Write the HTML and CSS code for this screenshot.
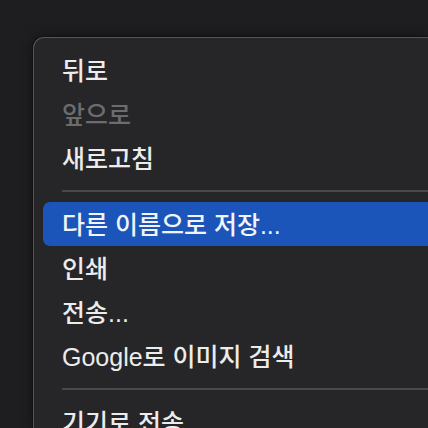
FILE: index.html
```html
<!DOCTYPE html>
<html lang="ko">
<head>
<meta charset="utf-8">
<link rel="stylesheet" href="styles.css">
</head>
<body>
<div class="menu">
  <div class="item">뒤로</div>
  <div class="item disabled">앞으로</div>
  <div class="item">새로고침</div>
  <div class="sep"></div>
  <div class="item active">다른 이름으로 저장...</div>
  <div class="item">인쇄</div>
  <div class="item">전송...</div>
  <div class="item">Google로 이미지 검색</div>
  <div class="sep"></div>
  <div class="item">기기로 전송</div>
</div>
</body>
</html>
```
FILE: styles.css
```css
html, body {
  margin: 0;
  padding: 0;
  width: 428px;
  height: 428px;
  overflow: hidden;
  background: #1e1e20;
}
body {
  padding: 37px 0 0 33px;
  box-sizing: border-box;
  font-family: "Liberation Sans", "Noto Sans CJK KR", sans-serif;
}
.menu {
  width: 395px;
  height: 391px;
  box-sizing: border-box;
  background: #262528;
  border: 1px solid #565558;
  border-right: none;
  border-bottom: none;
  border-radius: 11px 0 0 0;
  box-shadow: 0 0 0 1px #111, 0 0 12px rgba(0,0,0,0.5);
  padding: 10px 0 0 9px;
  display: flex;
  flex-direction: column;
  overflow: hidden;
}
.item {
  flex: none;
  height: 44px;
  box-sizing: border-box;
  padding: 3px 0 0 19px;
  line-height: 41px;
  font-size: 25px;
  font-weight: 500;
  color: #ececed;
  white-space: nowrap;
  border-radius: 7px 0 0 7px;
}
.item.disabled {
  color: #6c6b6e;
}
.item.active {
  background: #1c55b9;
  color: #f2f4fb;
}
.sep {
  flex: none;
  height: 2px;
  margin: 10px 0 10px 19px;
  background: #49484b;
}
```
